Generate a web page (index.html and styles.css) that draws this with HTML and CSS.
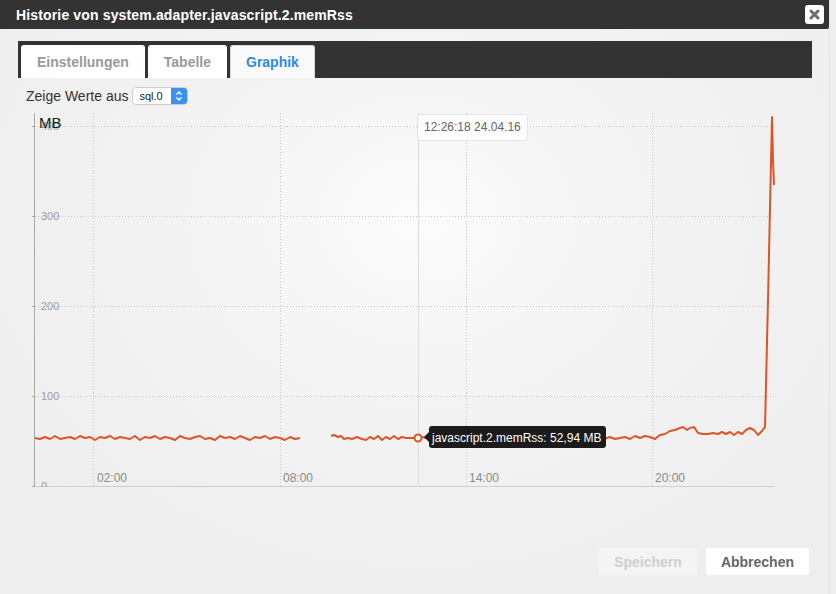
FILE: index.html
```html
<!DOCTYPE html>
<html>
<head>
<meta charset="utf-8">
<link rel="stylesheet" href="styles.css">
</head>
<body>
<div class="dialog">
  <div class="titlebar">
    <span class="title">Historie von system.adapter.javascript.2.memRss</span>
    <span class="close"><svg width="11" height="11" viewBox="0 0 11 11"><path d="M2 2 L9 9 M9 2 L2 9" stroke="#6b6b6b" stroke-width="3" stroke-linecap="round"/></svg></span>
  </div>
  <div class="content">
    <div class="tabbar">
      <div class="tab">Einstellungen</div>
      <div class="tab">Tabelle</div>
      <div class="tab active">Graphik</div>
    </div>
    <div class="source">
      <span class="label">Zeige Werte aus</span>
      <span class="select"><span class="sel-text">sql.0</span><span class="sel-btn"><svg width="8" height="12" viewBox="0 0 8 12"><path d="M1.5 4.5 L4 2 L6.5 4.5 M1.5 7.5 L4 10 L6.5 7.5" stroke="#fff" stroke-width="1.4" fill="none"/></svg></span></span>
    </div>
    <svg class="chart" width="794" height="392" viewBox="18 108 794 392">
      <defs>
        <clipPath id="plot"><rect x="18" y="108" width="794" height="379"/></clipPath>
      </defs>
      <g stroke="#c8c8c8" stroke-width="1" stroke-dasharray="1 2" fill="none">
        <line x1="35" y1="126.5" x2="775" y2="126.5"/>
        <line x1="35" y1="216.5" x2="775" y2="216.5"/>
        <line x1="35" y1="306.5" x2="775" y2="306.5"/>
        <line x1="35" y1="396.5" x2="775" y2="396.5"/>
        <line x1="93.5" y1="113" x2="93.5" y2="486"/>
        <line x1="280.5" y1="113" x2="280.5" y2="486"/>
        <line x1="466.5" y1="113" x2="466.5" y2="486"/>
        <line x1="652.5" y1="113" x2="652.5" y2="486"/>
      </g>
      <line x1="418.5" y1="113" x2="418.5" y2="486" stroke="#dcdcdc" stroke-width="1"/>
      <line x1="33" y1="486.5" x2="775" y2="486.5" stroke="#cfcfcf" stroke-width="1"/>
      <line x1="34.5" y1="113" x2="34.5" y2="487" stroke="#a8a8a8" stroke-width="1"/>
      <g stroke="#a8a8a8" stroke-width="1">
        <line x1="32" y1="126.5" x2="35" y2="126.5"/>
        <line x1="32" y1="216.5" x2="35" y2="216.5"/>
        <line x1="32" y1="306.5" x2="35" y2="306.5"/>
        <line x1="32" y1="396.5" x2="35" y2="396.5"/>
        <line x1="32" y1="486.5" x2="35" y2="486.5"/>
      </g>
      <g class="ylab" clip-path="url(#plot)">
        <text x="41" y="130">400</text>
        <text x="41" y="220">300</text>
        <text x="41" y="310">200</text>
        <text x="41" y="400">100</text>
        <text x="41" y="490">0</text>
      </g>
      <g class="xlab">
        <text x="97" y="482">02:00</text>
        <text x="283" y="482">08:00</text>
        <text x="469" y="482">14:00</text>
        <text x="655" y="482">20:00</text>
      </g>
      <text class="unit" x="39" y="128">MB</text>
      <g fill="none" stroke="#dc5526" stroke-width="2" stroke-linejoin="round">
        <polyline points="35,438 40,439 45,437 50,439 55,436 60,439 65,438 70,437 75,439 80,436 85,438 90,437 95,440 100,437 105,438 110,436 115,439 120,437 125,438 130,439 135,436 140,440 145,437 150,438 155,436 160,439 165,437 170,438 175,440 180,436 185,438 190,439 195,437 200,436 205,439 210,438 215,440 220,436 225,438 230,437 235,439 240,436 245,438 250,440 255,437 260,438 265,436 270,439 275,437 280,438 285,440 290,437 295,439 300,438"/>
        <polyline points="331,436 334,435 338,437 341,436 344,439 348,438 352,439 357,437 362,439 366,440 370,437 374,439 378,436 382,440 386,437 390,439 394,436 398,439 402,437 406,438 410,438 414,438 418,438 422,437 426,438 432,437 438,439 444,436 447,428 450,436 455,438 460,437 466,439 472,437 478,438 484,436 490,439 496,437 502,438 508,436 514,439 520,437 526,438 532,439 538,436 544,438 550,437 556,439 562,436 568,438 574,437 580,439 586,437 592,438 598,436 604,439 610,437 615,439 620,438 625,437 630,439 635,436 640,438 645,436 650,437 655,439 660,435 665,434 670,431 675,430 680,428 683,427 687,430 690,428 694,427 698,433 703,434 708,434 713,433 718,434 722,432 726,434 730,432 734,435 738,432 742,434 746,430 750,428 754,430 758,435 762,431 765,427 768,300 772,117 773,160 774,185"/>
      </g>
      <circle cx="418" cy="438" r="3.5" fill="#fff" stroke="#dc5526" stroke-width="2"/>
      <rect x="417.5" y="114.5" width="110" height="26" rx="3" fill="rgba(255,255,255,0.75)" stroke="#e4e4e4"/>
      <text class="tiptime" x="424" y="131">12:26:18 24.04.16</text>
      <path d="M424 437 L430 431 L430 443 Z" fill="#1b1b1b"/>
      <rect x="429" y="426" width="177" height="22" rx="3" fill="#1b1b1b"/>
      <text class="tipval" x="432" y="442">javascript.2.memRss: 52,94 MB</text>
    </svg>
    <div class="footer">
      <span class="btn disabled">Speichern</span>
      <span class="btn">Abbrechen</span>
    </div>
  </div>
</div>
</body>
</html>
```
FILE: styles.css
```css
html, body {
  margin: 0;
  padding: 0;
}
body {
  width: 836px;
  height: 594px;
  overflow: hidden;
  background: #efefef;
  font-family: "Liberation Sans", Arial, Helvetica, sans-serif;
}
.dialog {
  width: 829px;
  height: 594px;
  background: radial-gradient(ellipse 520px 420px at 420px 220px, #fbfbfb 0%, #f3f3f3 45%, #eeeeee 100%);
  border-right: 1px solid #e6e6e6;
}
.titlebar {
  height: 29px;
  background: #333333;
  border-bottom-right-radius: 2px;
  display: flex;
  align-items: center;
  justify-content: space-between;
  padding: 0 5px 0 16px;
}
.title {
  color: #ffffff;
  font-weight: bold;
  font-size: 14px;
  letter-spacing: 0.15px;
}
.close {
  width: 19px;
  height: 19px;
  background: #ffffff;
  border-radius: 3px;
  display: flex;
  align-items: center;
  justify-content: center;
}
.content {
  padding: 12px 0 0 18px;
}
.tabbar {
  width: 791px;
  height: 33px;
  background: #333333;
  padding: 4px 0 0 3px;
  display: flex;
  gap: 3px;
}
.tab {
  height: 33px;
  padding: 0 16px;
  background: #ffffff;
  border-radius: 3px 3px 0 0;
  font-weight: bold;
  font-size: 14px;
  color: #9a9a9a;
  display: flex;
  align-items: center;
  box-sizing: border-box;
}
.tab.active {
  color: #2d8ae0;
  background: #fafafa;
  padding: 0 15px;
  border: 1px solid #d8d8d8;
  border-bottom: none;
}
.source {
  margin-top: 9px;
  padding-left: 8px;
  display: flex;
  align-items: center;
  height: 18px;
}
.label {
  font-size: 14px;
  color: #333333;
  margin-right: 4px;
}
.select {
  display: flex;
  width: 56px;
  height: 18px;
  box-sizing: border-box;
  border: 1px solid #cdcdcd;
  border-radius: 4px;
  background: #ffffff;
  overflow: hidden;
}
.sel-text {
  flex: 1;
  font-size: 11px;
  color: #222;
  padding-left: 6px;
  line-height: 16px;
}
.sel-btn {
  width: 16px;
  background: #3d8ff2;
  display: flex;
  align-items: center;
  justify-content: center;
}
.chart {
  display: block;
  margin-top: 3px;
}
.ylab text {
  font-size: 11px;
  fill: #9b9b9b;
}
.xlab text {
  font-size: 12px;
  fill: #8a8a8a;
}
.unit {
  font-size: 15px;
  fill: #1a1a1a;
}
.tiptime {
  font-size: 12px;
  fill: #666666;
}
.tipval {
  font-size: 12px;
  fill: #ffffff;
}
.footer {
  margin-top: 48px;
  margin-right: 20px;
  display: flex;
  justify-content: flex-end;
  gap: 9px;
}
.btn {
  height: 27px;
  padding: 0 15px;
  background: #ffffff;
  border-radius: 3px;
  font-weight: bold;
  font-size: 14px;
  color: #666666;
  display: flex;
  align-items: center;
}
.btn.disabled {
  background: #f4f4f4;
  color: #cfcfcf;
}
```
